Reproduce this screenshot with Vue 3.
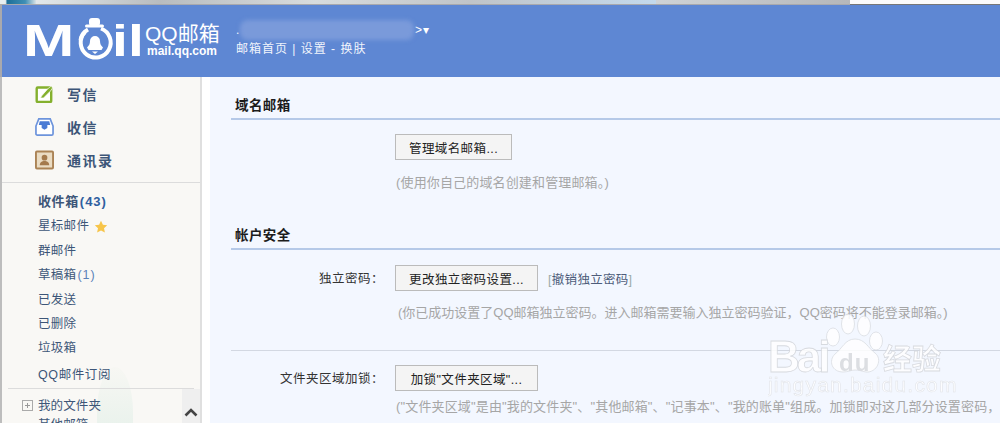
<script setup>
const folders = [
  { label: '星标邮件', star: true },
  { label: '群邮件' },
  { label: '草稿箱', count: '(1)' },
  { label: '已发送' },
  { label: '已删除' },
  { label: '垃圾箱' }
]
</script>

<template>
  <div class="page">
    <div class="strip">
      <span class="seg seg-a"></span><span class="seg seg-b"></span><span class="seg seg-c"></span><span class="seg seg-d"></span>
    </div>
    <header class="header">
      <div class="logo">
        <span class="logo-m">M</span>
        <svg class="logo-a" viewBox="0 0 40 44" width="40" height="44">
          <rect x="14" y="1" width="11" height="8" rx="3" fill="#fff"/>
          <rect x="10" y="7.500" width="19" height="3" rx="1.500" fill="#fff"/>
          <path d="M26 11.500A15 15 0 1 1 10 15" fill="none" stroke="#fff" stroke-width="4"/>
          <path d="M13 12.500A15 15 0 0 0 5.500 23" fill="none" stroke="#fff" stroke-width="4"/>
          <path d="M20 19a5 5 0 0 1 5 5c0 3 1 4.500 3 6.500l-1.500 2.500H13.500L12 30.500c2-2 3-3.500 3-6.500a5 5 0 0 1 5-5z" fill="#fff"/>
          <path d="M17 34.500h6l-3 2.500z" fill="#fff"/>
        </svg>
        <span class="logo-i">i</span><span class="logo-l">l</span>
      </div>
      <div class="brand">
        <div class="brand-name">QQ邮箱</div>
        <div class="brand-url">mail.qq.com</div>
      </div>
      <div class="user">
        <div class="user-line"><span class="dot">.</span><span class="smudge"></span><span class="gt">&gt;</span><span class="tri">▾</span></div>
        <div class="user-links">邮箱首页 | 设置 - 换肤</div>
      </div>
    </header>

    <div class="body">
      <aside class="side">
        <div class="blob"></div>
        <nav class="actions">
          <div class="action">
            <svg viewBox="0 0 18 18" width="18" height="18"><rect x="1.200" y="2.500" width="14.500" height="14.500" rx="1" fill="#fff" stroke="#84b02d" stroke-width="2.400"/><path d="M6 11 L13 3 L16 1 L17 3 L15 6 L8 13 L5 13 Z" fill="#84b02d" stroke="#fff" stroke-width=".7"/></svg>
            <span>写信</span>
          </div>
          <div class="action">
            <svg viewBox="0 0 20 20" width="20" height="20"><path d="M4 1.500H16L19 9V17a1.500 1.500 0 0 1-1.500 1.500H2.500A1.500 1.500 0 0 1 1 17V9Z" fill="#fff" stroke="#6d94dc" stroke-width="1.800"/><path d="M5 4H15L16 8H13V11H7V8H4Z" fill="#4a7bd4"/><path d="M7 11h6l-3 2z" fill="#4a7bd4"/></svg>
            <span>收信</span>
          </div>
          <div class="action">
            <svg viewBox="0 0 20 20" width="20" height="20"><rect x="1" y="1" width="18" height="18" rx="1" fill="#eadcc3" stroke="#ab8355" stroke-width="2"/><circle cx="10" cy="7.500" r="3" fill="#a47a4c"/><path d="M5 15.500c0-3.500 2.500-4.500 5-4.500s5 1 5 4.500z" fill="#a47a4c"/></svg>
            <span>通讯录</span>
          </div>
        </nav>
        <div class="folders">
          <div class="folder inbox">收件箱<span class="num">(43)</span></div>
          <div v-for="f in folders" :key="f.label" class="folder">
            {{ f.label }}<span v-if="f.count" class="num light">{{ f.count }}</span>
            <svg v-if="f.star" class="star" viewBox="0 0 14 14" width="14" height="14"><path d="M7 .8l1.900 4 4.300.5-3.200 3 .9 4.300L7 10.500 3.100 12.600 4 8.300.8 5.300l4.300-.5z" fill="#f7c54a"/></svg>
          </div>
          <div class="folder sub">QQ邮件订阅</div>
        </div>
        <div class="mine">
          <div class="mine-row"><span class="plus"></span>我的文件夹</div>
          <div class="mine-row next">其他邮箱</div>
          <div class="scroll"><svg viewBox="0 0 14 9" width="14" height="9"><path d="M1.500 7.500 7 2l5.500 5.500" fill="none" stroke="#444" stroke-width="2.600"/></svg></div>
        </div>
      </aside>

      <main class="main">
        <section class="first">
          <h2 class="title">域名邮箱</h2>
          <div class="row r-domain">
            <div class="label"></div>
            <div class="cell"><button class="btn b-domain">管理域名邮箱...</button></div>
          </div>
          <p class="hint h-domain">(使用你自己的域名创建和管理邮箱。)</p>
        </section>

        <section class="second">
          <h2 class="title">帐户安全</h2>
          <div class="row r-pass">
            <div class="label">独立密码：</div>
            <div class="cell">
              <button class="btn b-wide">更改独立密码设置...</button>
              <span class="revoke">[<span class="revoke-in">撤销独立密码</span>]</span>
            </div>
          </div>
          <p class="hint h-pass">(你已成功设置了QQ邮箱独立密码。进入邮箱需要输入独立密码验证，QQ密码将不能登录邮箱。)</p>
          <div class="sep"></div>
          <div class="row r-lock">
            <div class="label">文件夹区域加锁：</div>
            <div class="cell"><button class="btn b-wide">加锁"文件夹区域"...</button></div>
          </div>
          <p class="hint h-lock">("文件夹区域"是由"我的文件夹"、"其他邮箱"、"记事本"、"我的账单"组成。加锁即对这几部分设置密码，</p>
        </section>

        <div class="mark">
          <svg viewBox="0 0 190 100" width="190" height="100">
            <g class="paw">
              <ellipse cx="65" cy="27" rx="6.500" ry="9"/>
              <ellipse cx="80" cy="14" rx="6.500" ry="10"/>
              <ellipse cx="96" cy="16" rx="6.500" ry="10"/>
              <ellipse cx="108" cy="31" rx="6.500" ry="9"/>
              <path d="M87 29c10 0 13 9 20 14 8 6 2 20-9 19-5-1-7-2-11-2-4 0-7 2-12 2-11 0-15-11-8-18 7-5 10-15 20-15z"/>
            </g>
            <text x="0" y="62" class="mk-big">Bai</text>
            <text x="71" y="61" class="mk-du">du</text>
            <text x="115" y="60" class="mk-cn">经验</text>
            <text x="0" y="82" class="mk-url">jingyan.baidu.com</text>
          </svg>
        </div>
      </main>
    </div>
  </div>
</template>

<style>
html, body { margin: 0; padding: 0; overflow: hidden; background: #f3f7ff; }
</style>

<style scoped>
.page {
  width: 1000px;
  height: 423px;
  overflow: hidden;
  display: flex;
  flex-direction: column;
  font-family: "Liberation Sans", "Noto Sans CJK SC", sans-serif;
}
.strip { height: 5px; display: flex; flex: none; border-bottom: 1px solid #a9a9ad; box-sizing: border-box; }
.seg { display: block; height: 100%; }
.seg-a { width: 36px; background: linear-gradient(90deg, #e8eef0 15%, #1d6f98 20%, #3f8fb5 70%, #d7e2e6); }
.seg-b { width: 620px; background: linear-gradient(90deg, #e2e8ea, #b8bcbf 20%, #d8dcdd 45%, #c0c4c8 70%, #c3d9ec); }
.seg-c { width: 194px; background: linear-gradient(90deg, #cfd3d6, #b5b7ba); }
.seg-d { flex: 1; background: #fbfbfb; border-bottom: 1px solid #777; }

.header {
  height: 72px;
  flex: none;
  background: #5e87d3;
  display: flex;
  align-items: flex-start;
  color: #fff;
  padding-left: 27px;
  box-shadow: inset 2px 0 0 #a9a9ad;
}
.logo { display: flex; align-items: flex-start; width: 114px; height: 60px; margin-top: 10px; }
.logo-m {
  font: 700 44px/44px "Liberation Sans", sans-serif;
  display: inline-block;
  transform: scaleX(1.400);
  transform-origin: left;
  width: 52px;
  margin-left: -4px;
  margin-top: 4px;
}
.logo-a { margin-top: 2px; }
.logo-i, .logo-l {
  font: 700 44px/44px "Liberation Sans", sans-serif;
  display: inline-block;
  transform: scaleX(1.300);
  transform-origin: left;
  margin-top: 4px;
}
.logo-i { margin-left: -3px; width: 16px; }
.brand { width: 91px; }
.brand-name { font-size: 21px; line-height: 24px; margin-top: 17px; margin-left: 4px; white-space: nowrap; }
.brand-url { font: 700 12px/13px "Liberation Sans", sans-serif; margin-left: 6px; margin-top: -1px; }
.user { margin-top: 14px; margin-left: 4px; }
.user-line { display: flex; align-items: center; height: 22px; font-size: 12px; }
.dot { width: 4px; }
.smudge { width: 174px; height: 20px; background: #7a9ada; border-radius: 8px; filter: blur(2px); }
.gt { font-size: 12px; margin-left: 1px; }
.tri { font-size: 12px; margin-left: 1px; }
.user-links { font-size: 12px; letter-spacing: 1px; line-height: 16px; margin-top: 0; white-space: nowrap; color: #f2f5fc; }

.body { flex: 1; display: flex; min-height: 0; background: #f3f7ff; }
.side {
  width: 198px;
  flex: none;
  background: #f9f8f5;
  border-left: 2px solid #bdbdbd;
  border-right: 2px solid #dfdfdf;
  color: #3d5678;
  overflow: hidden;
  margin-right: 8px;
  box-shadow: 8px 0 0 #fff;
  position: relative;
}
.blob { position: absolute; left: 95px; top: 290px; width: 36px; height: 90px; border-radius: 50% 50% 40% 40%; background: linear-gradient(#f7f7f3, #e9f2ec 70%); }
.actions { height: 105px; border-bottom: 1px solid #dcdcdc; position: relative; }
.action { display: flex; align-items: center; height: 33.300px; padding-left: 33px; gap: 13px; font-size: 14px; font-weight: 700; letter-spacing: 1.500px; }
.action svg { width: 19px; flex: none; }
.folders { padding-top: 7px; height: 198px; padding-left: 36px; box-sizing: border-box; position: relative; }
.folder { height: 24.400px; line-height: 24.400px; font-size: 12.500px; letter-spacing: .3px; white-space: nowrap; display: flex; align-items: center; }
.inbox { font-weight: 700; font-size: 13px; letter-spacing: .6px; }
.num { color: #2f5f9f; margin-left: 1px; letter-spacing: 1px; }
.light { font-weight: 400; color: #5b82b8; }
.star { margin-left: 5px; }
.sub { margin-top: 1px; height: 26px; letter-spacing: .6px; }
.mine { border-top: 1px solid #dcdcdc; margin: 7px 6px 0; position: relative; height: 60px; }
.mine-row { font-size: 12.500px; padding-left: 30px; line-height: 24px; margin-top: 5px; letter-spacing: .1px; white-space: nowrap; position: relative; }
.next { margin-top: -5px; }
.plus { position: absolute; left: 14px; top: 6px; width: 9px; height: 9px; border: 1px solid #aaa; background:
  linear-gradient(#999, #999) center / 5px 1px no-repeat,
  linear-gradient(#999, #999) center / 1px 5px no-repeat; }
.scroll { position: absolute; right: -6px; top: 0; width: 18px; height: 40px; background: #efefef; display: flex; justify-content: center; padding-top: 19px; box-sizing: border-box; }

.main { flex: 1; position: relative; padding-left: 21px; overflow: hidden; min-width: 0; }
.first { padding-top: 19px; }
.second { padding-top: 34px; }
.title { margin: 0; font-size: 13.500px; font-weight: 700; color: #1c1c1c; line-height: 20px; padding-left: 4px; padding-bottom: 2px; border-bottom: 2px solid #b5c9e8; letter-spacing: .4px; }
.row { display: flex; align-items: center; }
.label { width: 153px; text-align: right; font-size: 12.500px; color: #333; letter-spacing: .5px; white-space: nowrap; margin-top: -1px; }
.cell { margin-left: 11px; display: flex; align-items: center; }
.btn {
  font: 12.500px "Liberation Sans", "Noto Sans CJK SC", sans-serif;
  letter-spacing: .4px;
  color: #222;
  background: #f4f4f4;
  border: 1px solid #bbb;
  border-radius: 0;
  padding: 0;
  height: 26px;
  white-space: nowrap;
}
.b-domain { width: 117px; }
.b-wide { width: 143px; }
.r-domain { margin-top: 14px; }
.hint { margin: 0; font-size: 13px; color: #a6a6a6; white-space: nowrap; line-height: 18px; }
.h-domain { margin-top: 14px; margin-left: 165px; letter-spacing: .15px; }
.r-pass { margin-top: 15px; }
.revoke { margin-left: 10px; color: #9aa; font-size: 12.500px; letter-spacing: .3px; white-space: nowrap; }
.revoke-in { color: #4d5c7a; }
.h-pass { margin-top: 13px; margin-left: 167px; }
.sep { height: 1px; background: #d3d8e2; margin-top: 28px; }
.r-lock { margin-top: 14px; }
.h-lock { margin-top: 7px; margin-left: 165px; letter-spacing: .15px; }

.mark { position: absolute; left: 558px; top: 233px; opacity: .85; pointer-events: none; }
.paw { fill: #fff; stroke: #d6d8dd; stroke-width: .8; }
.mk-big { font: 700 44px "Liberation Sans", sans-serif; fill: #fff; stroke: #d3d5da; stroke-width: .8; letter-spacing: -3px; }
.mk-du { font: 700 24px "Liberation Sans", sans-serif; fill: #d8dade; letter-spacing: 1px; }
.mk-cn { font: 700 29px "Noto Sans CJK SC", sans-serif; fill: #fff; stroke: #d3d5da; stroke-width: .8; }
.mk-url { font: 400 21px "Liberation Sans", sans-serif; fill: #fff; stroke: #dfe1e6; stroke-width: .6; letter-spacing: 1.200px; }
</style>
